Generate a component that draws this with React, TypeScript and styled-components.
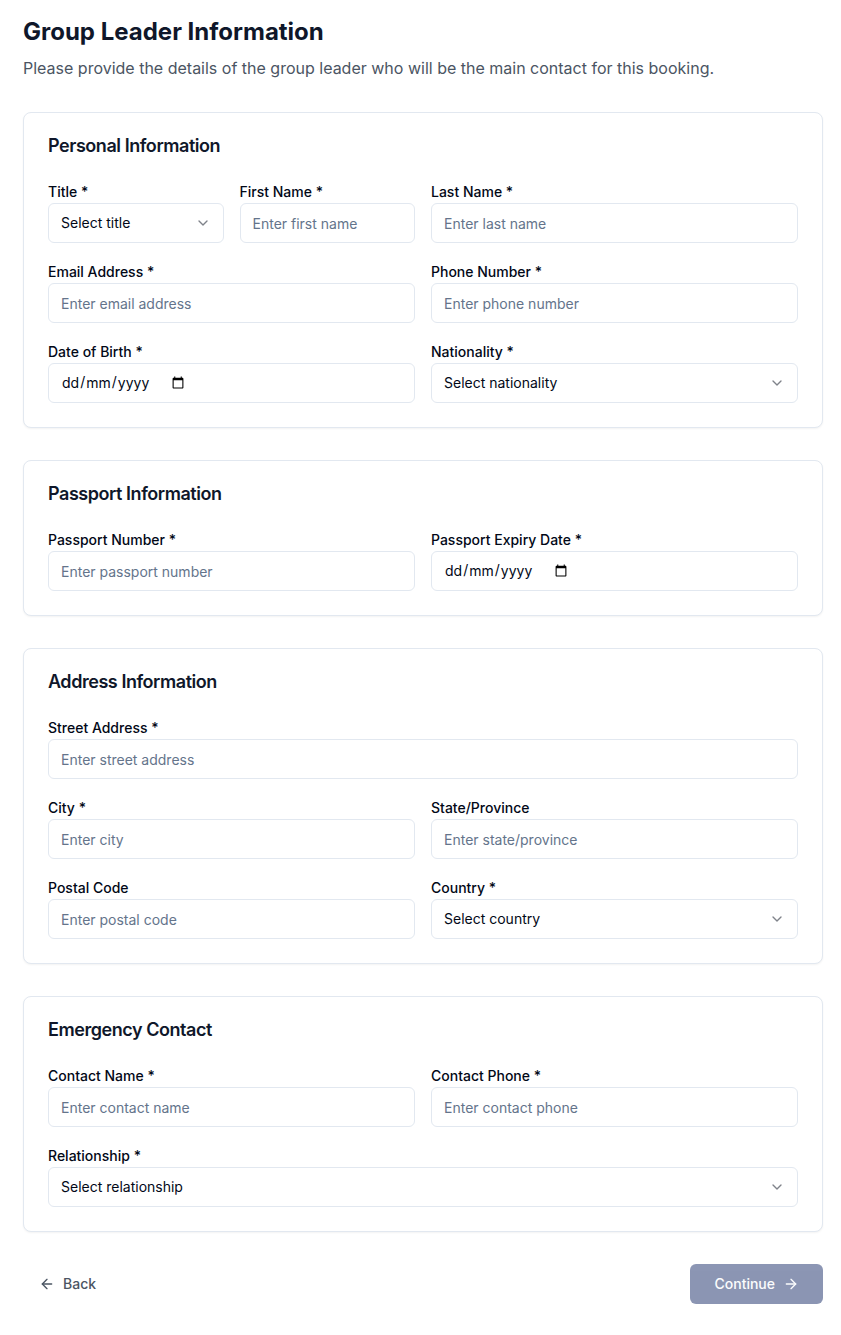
import React from "react";
import styled, { createGlobalStyle } from "styled-components";
import { ArrowLeft, ArrowRight, ChevronDown } from "lucide-react";

const GlobalStyle = createGlobalStyle`
  *, *::before, *::after { box-sizing: border-box; }
  body {
    margin: 0;
    background: #ffffff;
    color: #020817;
    font-family: Inter, "Liberation Sans", sans-serif;
    font-size: 16px;
    line-height: 24px;
  }
  h1, h2, p { margin: 0; }
  button, input, select { font-family: inherit; color: inherit; }
`;

const Page = styled.main`
  padding: 16px 18px 32px 23px;
`;

const Form = styled.form`
  display: flex;
  flex-direction: column;
  gap: 32px;
`;

const PageHeader = styled.header`
  display: flex;
  flex-direction: column;
  gap: 8px;
`;

const PageTitle = styled.h1`
  font-size: 24px;
  line-height: 32px;
  font-weight: 700;
  color: #0f172a;
`;

const Intro = styled.p`
  color: #4b5563;
`;

const Card = styled.section`
  display: flex;
  flex-direction: column;
  gap: 24px;
  padding: 24px;
  border: 1px solid #e2e8f0;
  border-radius: 8px;
  background: #ffffff;
  box-shadow: 0 1px 2px rgba(0, 0, 0, 0.05);
`;

const CardTitle = styled.h2`
  font-size: 18px;
  line-height: 18px;
  font-weight: 600;
  letter-spacing: -0.025em;
  color: #0f172a;
`;

const FieldGrid = styled.div`
  display: grid;
  grid-template-columns: repeat(4, minmax(0, 1fr));
  gap: 16px;
`;

const FieldBox = styled.div<{ $span: number }>`
  grid-column: span ${(p) => p.$span};
`;

const LabelRow = styled.div`
  height: 24px;
`;

const Label = styled.label`
  font-size: 14px;
  font-weight: 500;
`;

const TextInput = styled.input`
  display: flex;
  width: 100%;
  height: 40px;
  padding: 8px 12px;
  border: 1px solid #e2e8f0;
  border-radius: 6px;
  background: #ffffff;
  font-size: 14px;
  line-height: 20px;

  &::placeholder {
    color: #64748b;
    opacity: 1;
  }
`;

/* The day comes first, whatever order the browser's locale uses. */
const DateInput = styled(TextInput)`
  &::-webkit-datetime-edit-fields-wrapper {
    display: inline-grid;
    grid-auto-flow: column;
  }
  &::-webkit-datetime-edit-day-field { grid-area: 1 / 1; }
  &::-webkit-datetime-edit-month-field { grid-area: 1 / 3; }
  &::-webkit-datetime-edit-year-field { grid-area: 1 / 5; }
  &::-webkit-datetime-edit-text { grid-row: 1; }
`;

const SelectBox = styled.div`
  position: relative;
`;

const Select = styled.select`
  display: block;
  width: 100%;
  height: 40px;
  padding: 8px 36px 8px 12px;
  border: 1px solid #e2e8f0;
  border-radius: 6px;
  background: #ffffff;
  appearance: none;
  font-size: 14px;
  line-height: 20px;
`;

const SelectArrow = styled(ChevronDown)`
  position: absolute;
  top: 12px;
  right: 13px;
  opacity: 0.5;
  pointer-events: none;
`;

const Actions = styled.div`
  display: flex;
  justify-content: space-between;
`;

const Button = styled.button<{ $primary?: boolean }>`
  display: inline-flex;
  align-items: center;
  gap: 8px;
  height: 40px;
  padding: 8px ${(p) => (p.$primary ? 24 : 16)}px;
  border: 0;
  border-radius: 6px;
  background: ${(p) => (p.$primary ? "#1a2e69" : "transparent")};
  color: ${(p) => (p.$primary ? "#f8fafc" : "#4b5563")};
  font-size: 14px;
  line-height: 20px;
  font-weight: 500;

  &:disabled { opacity: 0.5; }
`;

type FieldSpec = {
  id: string;
  label: string;
  hint?: string;
  kind?: "text" | "email" | "tel" | "date" | "select";
  options?: string[];
  span?: number;
};

const sections: { title: string; fields: FieldSpec[] }[] = [
  {
    title: "Personal Information",
    fields: [
      { id: "title", label: "Title *", hint: "Select title", kind: "select", span: 1 },
      { id: "firstName", label: "First Name *", hint: "Enter first name", span: 1 },
      { id: "lastName", label: "Last Name *", hint: "Enter last name" },
      { id: "email", label: "Email Address *", hint: "Enter email address", kind: "email" },
      { id: "phone", label: "Phone Number *", hint: "Enter phone number", kind: "tel" },
      { id: "birthDate", label: "Date of Birth *", kind: "date" },
      { id: "nationality", label: "Nationality *", hint: "Select nationality", kind: "select" },
    ],
  },
  {
    title: "Passport Information",
    fields: [
      { id: "passportNumber", label: "Passport Number *", hint: "Enter passport number" },
      { id: "passportExpiry", label: "Passport Expiry Date *", kind: "date" },
    ],
  },
  {
    title: "Address Information",
    fields: [
      { id: "street", label: "Street Address *", hint: "Enter street address", span: 4 },
      { id: "city", label: "City *", hint: "Enter city" },
      { id: "state", label: "State/Province", hint: "Enter state/province" },
      { id: "postalCode", label: "Postal Code", hint: "Enter postal code" },
      { id: "country", label: "Country *", hint: "Select country", kind: "select" },
    ],
  },
  {
    title: "Emergency Contact",
    fields: [
      { id: "contactName", label: "Contact Name *", hint: "Enter contact name" },
      { id: "contactPhone", label: "Contact Phone *", hint: "Enter contact phone", kind: "tel" },
      { id: "relationship", label: "Relationship *", hint: "Select relationship", kind: "select", span: 4 },
    ],
  },
];

function Field({ id, label, hint, kind = "text", span = 2 }: FieldSpec) {
  return (
    <FieldBox $span={span}>
      <LabelRow>
        <Label htmlFor={id}>{label}</Label>
      </LabelRow>
      {kind === "select" ? (
        <SelectBox>
          <Select id={id} name={id} defaultValue="">
            <option value="">{hint}</option>
          </Select>
          <SelectArrow size={16} aria-hidden="true" />
        </SelectBox>
      ) : kind === "date" ? (
        <DateInput id={id} name={id} type="date" />
      ) : (
        <TextInput id={id} name={id} type={kind} placeholder={hint} />
      )}
    </FieldBox>
  );
}

export default function App() {
  return (
    <Page>
      <GlobalStyle />
      <Form>
        <PageHeader>
          <PageTitle>Group Leader Information</PageTitle>
          <Intro>
            Please provide the details of the group leader who will be the main contact for this booking.
          </Intro>
        </PageHeader>
        {sections.map((section) => (
          <Card key={section.title}>
            <CardTitle>{section.title}</CardTitle>
            <FieldGrid>
              {section.fields.map((field) => (
                <Field key={field.id} {...field} />
              ))}
            </FieldGrid>
          </Card>
        ))}
        <Actions>
          <Button type="button">
            <ArrowLeft size={16} aria-hidden="true" />
            Back
          </Button>
          <Button type="submit" $primary disabled>
            Continue
            <ArrowRight size={16} aria-hidden="true" />
          </Button>
        </Actions>
      </Form>
    </Page>
  );
}
